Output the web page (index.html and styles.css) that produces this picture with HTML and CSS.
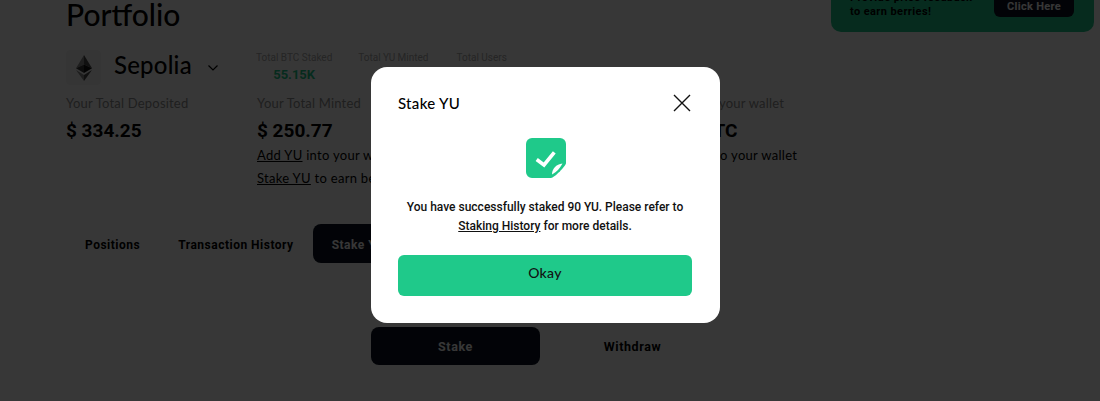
FILE: index.html
```html
<!DOCTYPE html>
<html lang="en">
<head>
    <meta charset="UTF-8">
    <meta name="viewport" content="width=device-width, initial-scale=1.0">
    <title>Portfolio</title>
    <link rel="stylesheet" href="styles.css">
</head>
<body>

<div class="page">
    <div class="page-head">
        <h1>Portfolio</h1>
        <div class="banner">
            <p>Provide price feedback<br>to earn berries!</p>
            <button class="banner-btn">Click Here</button>
        </div>
    </div>

    <div class="network-row">
        <div class="network">
            <div class="eth-box">
                <svg width="16" height="26" viewBox="0 0 16 26">
                    <polygon points="8,0 0,13.2 8,9.6" fill="#8a8a8a"/>
                    <polygon points="8,0 16,13.2 8,9.6" fill="#4a4a4a"/>
                    <polygon points="8,9.6 0,13.2 8,18" fill="#3a3a3a"/>
                    <polygon points="8,9.6 16,13.2 8,18" fill="#111"/>
                    <polygon points="0,15 8,26 8,20" fill="#8a8a8a"/>
                    <polygon points="16,15 8,26 8,20" fill="#4a4a4a"/>
                </svg>
            </div>
            <span class="network-name">Sepolia</span>
            <svg class="chevron" width="12" height="8" viewBox="0 0 12 8">
                <path d="M1.5 1.5 L6 6 L10.5 1.5" fill="none" stroke="#000" stroke-width="1.2"/>
            </svg>
        </div>
        <div class="stats">
            <div class="stat">
                <div class="stat-label">Total BTC Staked</div>
                <div class="stat-value">55.15K</div>
            </div>
            <div class="stat">
                <div class="stat-label">Total YU Minted</div>
            </div>
            <div class="stat">
                <div class="stat-label">Total Users</div>
            </div>
        </div>
    </div>

    <div class="cards">
        <div class="card">
            <div class="card-label">Your Total Deposited</div>
            <div class="card-value">$ 334.25</div>
        </div>
        <div class="card">
            <div class="card-label">Your Total Minted</div>
            <div class="card-value">$ 250.77</div>
            <p class="card-link"><a href="#">Add YU</a> into your wallet</p>
            <p class="card-link"><a href="#">Stake YU</a> to earn berries</p>
        </div>
        <div class="card">
            <div class="card-label">Your Total BTC in your wallet</div>
            <div class="card-value">0.004821 BTC</div>
            <p class="card-link">Move more BTC to your wallet</p>
        </div>
    </div>

    <div class="tabs">
        <button class="tab">Positions</button>
        <button class="tab">Transaction History</button>
        <button class="tab tab-active">Stake YU</button>
    </div>

    <div class="switch">
        <button class="switch-btn switch-active">Stake</button>
        <button class="switch-btn">Withdraw</button>
    </div>
</div>

<div class="overlay">
    <div class="modal">
        <div class="modal-head">
            <h2>Stake YU</h2>
            <svg class="close" width="18" height="18" viewBox="0 0 18 18">
                <path d="M1 1 L17 17 M17 1 L1 17" fill="none" stroke="#111" stroke-width="1.4"/>
            </svg>
        </div>
        <svg class="done-icon" width="40" height="40" viewBox="0 0 40 40">
            <path d="M6 0 H34 A6 6 0 0 1 40 6 V25 C40 28 28 40 25 40 H6 A6 6 0 0 1 0 34 V6 A6 6 0 0 1 6 0 Z" fill="#1fc98a"/>
            <path d="M10.7 21.5 L18 27 L28.3 14.3" fill="none" stroke="#fff" stroke-width="3.6"/>
            <path d="M26 36.5 C26 31 30 26 36.5 25.5 C34 30 31 34 26 36.5 Z" fill="#fff"/>
        </svg>
        <p class="modal-text">
            You have successfully staked 90 YU. Please refer to<br>
            <a href="#">Staking History</a> for more details.
        </p>
        <button class="okay-btn">Okay</button>
    </div>
</div>

</body>
</html>
```

FILE: styles.css
```css
html, body {
    height: 100%;
}
body {
    margin: 0;
    overflow: hidden;
    background-color: #fff;
    color: #000;
    font-family: Roboto, "Liberation Sans", sans-serif;
}
button {
    border: none;
    cursor: pointer;
    font-family: Roboto, "Liberation Sans", sans-serif;
}
a {
    color: inherit;
}
.page {
    margin-top: -28px;
    padding: 0 6px 0 66px;
}
.page-head {
    display: flex;
    justify-content: space-between;
    align-items: flex-end;
    margin-bottom: 18px;
}
h1 {
    margin: 0 0 4px;
    font-family: Lato, sans-serif;
    font-size: 30px;
    font-weight: 500;
    line-height: 28px;
}
.banner {
    display: flex;
    justify-content: space-between;
    align-items: flex-end;
    box-sizing: border-box;
    width: 263px;
    height: 60px;
    padding: 0 20px 15px 19px;
    background-color: #1fc98a;
    border-radius: 0 0 10px 10px;
}
.banner p {
    margin: 0 0 -2px;
    font-size: 11px;
    font-weight: 700;
    line-height: 14px;
    letter-spacing: 0.4px;
}
.banner-btn {
    width: 80px;
    height: 30px;
    padding-top: 10px;
    background-color: #0b1220;
    color: #fff;
    border-radius: 6px;
    font-size: 11px;
    font-weight: 700;
    letter-spacing: 0.3px;
}
.network-row {
    display: flex;
    height: 35px;
}
.network {
    display: flex;
    align-items: center;
    width: 190px;
}
.eth-box {
    display: flex;
    justify-content: center;
    align-items: center;
    width: 35px;
    height: 35px;
    margin-right: 13px;
    background-color: #f6f6f6;
    border-radius: 4px;
}
.network-name {
    margin-top: -6px;
    font-family: Lato, sans-serif;
    font-size: 24px;
    font-weight: 500;
    letter-spacing: 0.2px;
}
.chevron {
    margin: 0 0 0 15px;
}
.stats {
    display: flex;
    gap: 26px;
}
.stat {
    padding-top: 2px;
    text-align: center;
}
.stat:last-child {
    margin-left: 2px;
}
.stat-label {
    font-size: 10px;
    line-height: 12px;
    color: #aaa;
}
.stat-value {
    margin-top: 4px;
    font-size: 13px;
    font-weight: 700;
    line-height: 14px;
    color: #1fc98a;
}
.cards {
    display: grid;
    grid-template-columns: 191px 358px auto;
    margin-top: 10px;
}
.card-label {
    font-family: Lato, sans-serif;
    font-size: 13px;
    line-height: 16px;
    color: #909090;
    letter-spacing: 0.2px;
}
.card-value {
    margin-top: 8px;
    margin-bottom: 4px;
    font-size: 19px;
    font-weight: 700;
    line-height: 24px;
}
.card-link {
    margin: 0 0 7px;
    font-family: Lato, sans-serif;
    font-size: 13px;
    line-height: 16px;
    letter-spacing: 0.3px;
}
.tabs {
    display: flex;
    margin-top: 31px;
}
.tab {
    height: 39px;
    padding: 2px 19px 0;
    background: none;
    font-size: 12px;
    font-weight: 700;
    letter-spacing: 0.5px;
}
.tab-active {
    background-color: #0b1220;
    color: #fff;
    border-radius: 8px;
}
.switch {
    display: flex;
    margin: 64px 0 0 305px;
}
.switch-btn {
    width: 169px;
    height: 38px;
    padding-top: 2px;
    background: none;
    border-radius: 8px;
    font-size: 12.5px;
    font-weight: 700;
    letter-spacing: 0.6px;
}
.switch-btn + .switch-btn {
    margin-left: 8px;
}
.switch-active {
    background-color: #0b1220;
    color: #fff;
}
.overlay {
    position: fixed;
    top: 0;
    left: 0;
    right: 0;
    bottom: 0;
    box-sizing: border-box;
    padding: 67px 9px 0 0;
    display: flex;
    justify-content: center;
    align-items: flex-start;
    background-color: rgba(0, 0, 0, 0.784);
}
.modal {
    box-sizing: border-box;
    width: 349px;
    height: 256px;
    padding: 27px 28px 27px 27px;
    background-color: #fff;
    border-radius: 16px;
    text-align: center;
}
.modal-head {
    display: flex;
    justify-content: space-between;
    align-items: center;
    height: 18px;
    margin-bottom: 26px;
}
h2 {
    margin: 0;
    font-family: Lato, sans-serif;
    font-size: 15px;
    font-weight: 500;
    letter-spacing: 0.3px;
}
.close {
    margin-right: 1px;
}
.done-icon {
    display: block;
    margin: 0 0 0 128px;
}
.modal-text {
    margin: 20px 0 19px;
    font-size: 12px;
    font-weight: 500;
    line-height: 19px;
    color: #111;
}
.okay-btn {
    display: block;
    width: 100%;
    height: 41px;
    padding-bottom: 7px;
    background-color: #1fc98a;
    border-radius: 6px;
    font-family: Lato, sans-serif;
    font-size: 14px;
    font-weight: 500;
    letter-spacing: 0.3px;
    color: #111;
}
```
